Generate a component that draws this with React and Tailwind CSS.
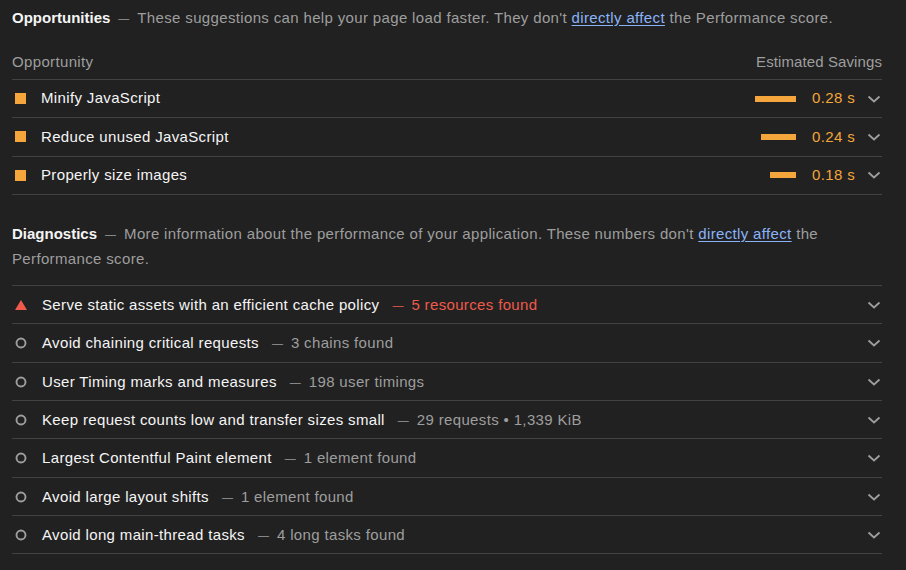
import React from "react";

const Chevron = () => (
  <svg width="16" height="16" viewBox="0 0 16 16" className="shrink-0">
    <path d="M2.5 5.5 L8 10.5 L13.5 5.5" fill="none" stroke="#9e9e9e" strokeWidth="1.8" />
  </svg>
);

const Square = () => <span className="w-[11px] h-[11px] bg-[#f4a53b] shrink-0 ml-[3px]" />;

const Triangle = () => (
  <svg width="14" height="12" viewBox="0 0 14 12" className="shrink-0 ml-[2px]">
    <polygon points="7,1 13,11 1,11" fill="#ef5a4b" />
  </svg>
);

const Circle = () => (
  <svg width="14" height="14" viewBox="0 0 14 14" className="shrink-0 ml-[2px]">
    <circle cx="7" cy="7" r="4.5" fill="none" stroke="#9e9e9e" strokeWidth="1.9" />
  </svg>
);

const Dash = ({ cls = "" }) => (
  <span className={"relative -top-px text-[11px] leading-none tracking-normal " + cls}>—</span>
);

const opps = [
  { t: "Minify JavaScript", w: 41, v: "0.28 s" },
  { t: "Reduce unused JavaScript", w: 35, v: "0.24 s" },
  { t: "Properly size images", w: 26, v: "0.18 s" },
];

const diags = [
  { t: "Serve static assets with an efficient cache policy", d: "5 resources found", fail: true },
  { t: "Avoid chaining critical requests", d: "3 chains found" },
  { t: "User Timing marks and measures", d: "198 user timings" },
  { t: "Keep request counts low and transfer sizes small", d: "29 requests • 1,339 KiB" },
  { t: "Largest Contentful Paint element", d: "1 element found" },
  { t: "Avoid large layout shifts", d: "1 element found" },
  { t: "Avoid long main-thread tasks", d: "4 long tasks found" },
];

export default function App() {
  return (
    <div
      className="w-[906px] h-[570px] bg-[#212121] text-[#f5f5f5] text-[15px] tracking-[0.35px] overflow-hidden"
      style={{ fontFamily: '"Liberation Sans", Arial, sans-serif' }}
    >
      <div className="pl-3 pr-6 pt-2">
        <div className="leading-5">
          <span className="font-bold tracking-normal">Opportunities</span>
          <Dash cls="mx-2 text-[#9e9e9e]" />
          <span className="text-[#9e9e9e]">
            These suggestions can help your page load faster. They don't{" "}
            <a className="text-[#8ab4f8] underline underline-offset-2">directly affect</a> the Performance score.
          </span>
        </div>

        <div className="mt-6 flex justify-between leading-5 pb-[7px] text-[#9e9e9e] border-b border-[#424242]">
          <span>Opportunity</span>
          <span className="tracking-[0.1px]">Estimated Savings</span>
        </div>

        {opps.map((o) => (
          <div key={o.t} className="h-[38.33px] flex items-center border-b border-[#424242]">
            <Square />
            <span className="ml-[15px] flex-1">{o.t}</span>
            <span className="h-[6px] bg-[#f4a53b]" style={{ width: o.w }} />
            <span className="ml-4 text-[#f4a53b]">{o.v}</span>
            <span className="ml-[11px]">
              <Chevron />
            </span>
          </div>
        ))}

        <div className="mt-[26px] leading-[25px] pb-[14px] border-b border-[#424242]">
          <span className="font-bold tracking-normal">Diagnostics</span>
          <Dash cls="mx-2 text-[#9e9e9e]" />
          <span className="text-[#9e9e9e]">
            More information about the performance of your application. These numbers don't{" "}
            <a className="text-[#8ab4f8] underline underline-offset-2">directly affect</a> the Performance score.
          </span>
        </div>

        {diags.map((d) => (
          <div key={d.t} className="h-[38.33px] pt-px flex items-center border-b border-[#424242]">
            {d.fail ? <Triangle /> : <Circle />}
            <span className="ml-[14px]">{d.t}</span>
            <span className={"flex-1 " + (d.fail ? "text-[#ef5a4b]" : "text-[#9e9e9e]")}>
              <Dash cls="ml-[13px] mr-2" />
              {d.d}
            </span>
            <Chevron />
          </div>
        ))}
      </div>
    </div>
  );
}
